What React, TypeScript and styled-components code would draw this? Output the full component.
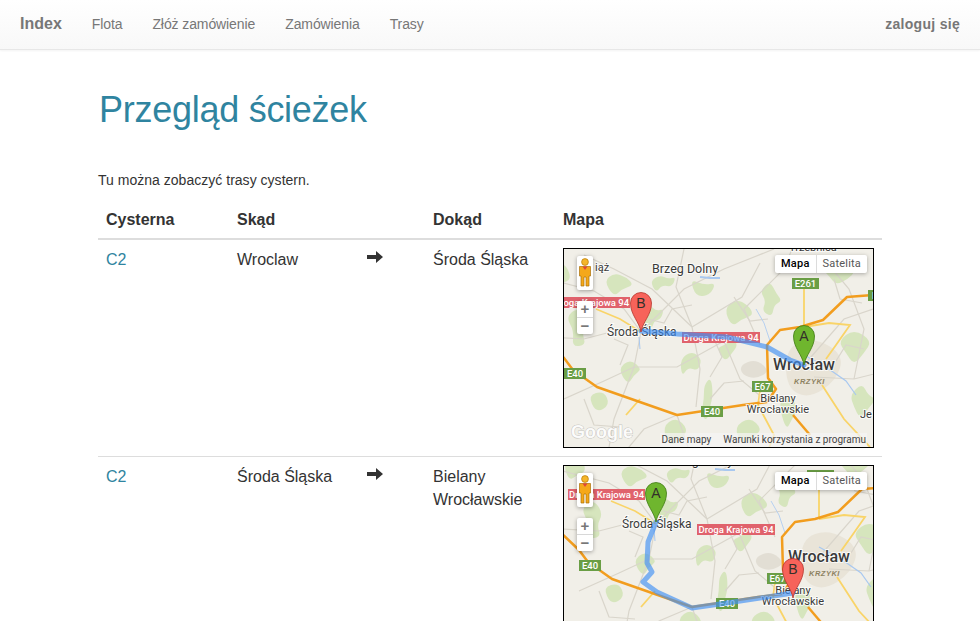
import styled, { createGlobalStyle } from "styled-components";

const GlobalStyle = createGlobalStyle`
  html, body {
    margin: 0;
    padding: 0;
    background: #fff;
  }
  body {
    font-family: "Liberation Sans", Arial, sans-serif;
    font-size: 14px;
    line-height: 1.42857;
    color: #333;
  }
`;

const Navbar = styled.nav`
  display: flex;
  align-items: center;
  justify-content: space-between;
  height: 49px;
  padding: 0 20px;
  background: linear-gradient(to bottom, #ffffff 0%, #f8f8f8 100%);
  border-bottom: 1px solid #e7e7e7;
  box-shadow: 0 1px 2px rgba(0, 0, 0, 0.05);
`;

const NavLeft = styled.div`
  display: flex;
  align-items: center;
`;

const Brand = styled.a`
  font-size: 16px;
  font-weight: bold;
  color: #777;
  margin-right: 30px;
`;

const NavLink = styled.a`
  color: #777;
  margin-right: 30px;
  letter-spacing: -0.1px;
`;

const LoginLink = styled.a`
  color: #777;
  font-weight: bold;
  letter-spacing: 0.3px;
`;

const Page = styled.main`
  padding: 0 98px;
`;

const Title = styled.h1`
  margin: 40px 0 41px 1px;
  font-size: 36px;
  font-weight: 500;
  line-height: 40px;
  letter-spacing: -0.27px;
  color: #2f84a0;
`;

const Intro = styled.p`
  margin: 0 0 8px;
  letter-spacing: 0.02px;
`;

const Table = styled.table`
  width: 100%;
  table-layout: fixed;
  border-collapse: collapse;
  font-size: 16px;
`;

const Th = styled.th<{ $width: number }>`
  box-sizing: border-box;
  width: ${(p) => p.$width}px;
  padding: 10px 8px 6px;
  text-align: left;
  font-weight: bold;
  border-bottom: 2px solid #ddd;
`;

const Td = styled.td`
  padding: 8px;
  vertical-align: top;
  border-top: 1px solid #ddd;
  tr:first-child > & {
    border-top: 0;
  }
`;

const CellText = styled.span`
  display: block;
  margin-top: 1px;
`;

const CellLink = styled.a`
  color: #2f84a0;
`;

const ArrowIcon = styled.svg`
  display: block;
  margin-top: 3px;
`;

const MapFrame = styled.div`
  position: relative;
  width: 309px;
  height: 198px;
  border: 1px solid #000;
  overflow: hidden;
  background: #f1efe8;
  font-family: Roboto, "Liberation Sans", sans-serif;
`;

const MapCanvas = styled.svg`
  display: block;
`;

const Place = styled.text<{ $size?: number; $bold?: boolean }>`
  font-family: Roboto, "Liberation Sans", sans-serif;
  font-size: ${(p) => p.$size ?? 11.5}px;
  font-weight: ${(p) => (p.$bold ? 500 : 400)};
  fill: #3a3a3a;
  stroke: rgba(255, 255, 255, 0.75);
  stroke-width: 2px;
  paint-order: stroke;
`;

const District = styled.text`
  font-family: "Liberation Sans", sans-serif;
  font-size: 7.5px;
  font-weight: bold;
  font-style: italic;
  letter-spacing: 0.5px;
  fill: #8d8262;
`;

const SignText = styled.text`
  font-family: Roboto, "Liberation Sans", sans-serif;
  font-size: 9.5px;
  font-weight: 500;
  fill: #fff;
`;

const PinLetter = styled.text`
  font-family: "Liberation Sans", sans-serif;
  font-size: 14px;
  fill: #33302a;
`;

const GoogleMark = styled.text`
  font-family: "Liberation Sans", sans-serif;
  font-size: 18px;
  font-weight: bold;
  fill: rgba(255, 255, 255, 0.9);
  stroke: rgba(130, 130, 130, 0.4);
  stroke-width: 1px;
  paint-order: stroke;
`;

const PegmanBox = styled.div`
  position: absolute;
  left: 13px;
  top: 7px;
  width: 16px;
  height: 34px;
  background: #fff;
  border-radius: 2px;
  box-shadow: 0 1px 4px rgba(0, 0, 0, 0.35);
`;

const ZoomBox = styled.div`
  position: absolute;
  left: 13px;
  top: 52px;
  width: 16px;
  height: 33px;
  display: flex;
  flex-direction: column;
  background: #fff;
  border-radius: 2px;
  box-shadow: 0 1px 4px rgba(0, 0, 0, 0.35);
`;

const ZoomButton = styled.div`
  flex: 1;
  display: flex;
  align-items: center;
  justify-content: center;
  font-family: "Liberation Sans", sans-serif;
  font-size: 15px;
  font-weight: bold;
  line-height: 1;
  color: #777;
  & + & {
    border-top: 1px solid #d8d8d8;
  }
`;

const TypeBar = styled.div`
  position: absolute;
  right: 6px;
  top: 6px;
  display: flex;
  height: 18px;
  background: #fff;
  border-radius: 2px;
  box-shadow: 0 1px 4px rgba(0, 0, 0, 0.3);
`;

const TypeButton = styled.div<{ $active?: boolean }>`
  display: flex;
  align-items: center;
  padding: 0 6px;
  font-size: 11px;
  letter-spacing: 0.2px;
  font-weight: ${(p) => (p.$active ? 500 : 400)};
  color: ${(p) => (p.$active ? "#000" : "#565656")};
  & + & {
    border-left: 1px solid #dcdcdc;
  }
`;

const Attribution = styled.div`
  position: absolute;
  right: 6px;
  bottom: 0;
  display: flex;
  gap: 12px;
  padding: 0 1px;
  font-size: 10px;
  line-height: 14px;
  color: #444;
  background: rgba(245, 245, 245, 0.7);
`;

type Point = [number, number];

const line = (pts: Point[]) => pts.map((p) => p.join(",")).join(" ");

// rounded outline through the midpoints, so the woods don't look like polygons
const blob = (pts: Point[]) => {
  const mid = (a: Point, b: Point) => `${(a[0] + b[0]) / 2} ${(a[1] + b[1]) / 2}`;
  const n = pts.length;
  let d = `M${mid(pts[n - 1], pts[0])}`;
  pts.forEach((p, i) => {
    d += ` Q${p[0]} ${p[1]} ${mid(p, pts[(i + 1) % n])}`;
  });
  return d + "Z";
};

const greenAreas: Point[][] = [
  [[78, 64], [86, 56], [92, 62], [100, 60], [97, 70], [90, 72], [88, 80], [80, 76]],
  [[154, 98], [162, 96], [168, 88], [174, 96], [168, 104], [162, 112], [156, 106]],
  [[140, 136], [147, 128], [149, 146], [146, 158], [143, 172], [137, 166], [140, 150]],
  [[86, 32], [96, 26], [104, 30], [112, 28], [108, 38], [98, 36], [92, 44]],
  [[196, 42], [206, 32], [212, 44], [218, 52], [210, 56], [208, 68], [198, 62], [202, 52]],
  [[286, 146], [298, 134], [304, 146], [312, 150], [304, 160], [296, 170], [290, 158]],
  [[40, 32], [50, 24], [62, 28], [70, 36], [58, 40], [50, 48]],
  [[160, 60], [172, 50], [184, 56], [190, 66], [178, 70], [168, 78]],
  [[2, 68], [14, 58], [24, 72], [18, 84], [22, 96], [8, 98], [10, 82]],
  [[116, 110], [128, 102], [138, 110], [134, 122], [124, 118], [118, 128]],
  [[54, 120], [66, 110], [78, 120], [70, 126], [64, 136]],
  [[258, 20], [272, 12], [292, 22], [284, 30], [272, 36], [266, 28]],
  [[274, 92], [290, 80], [308, 92], [300, 104], [290, 116], [282, 104]],
  [[-16, 22], [0, 12], [8, 30], [-2, 34], [-10, 40]],
  [[170, 178], [186, 168], [198, 180], [190, 188], [178, 196]],
  [[98, 178], [112, 168], [124, 180], [118, 190], [106, 198]],
  [[214, 152], [226, 144], [234, 160], [228, 170], [222, 182]],
  [[126, 30], [140, 36], [152, 34], [146, 46], [132, 48]],
  [[24, 146], [40, 142], [46, 156], [32, 164]],
];

const minorRoads: Point[][] = [
  [[-16, 30], [30, 42], [60, 60], [77, 83], [70, 118], [50, 170], [44, 204]],
  [[77, 83], [120, 40], [160, 20], [210, 0]],
  [[120, 0], [112, 38], [128, 78], [136, 120], [132, 158]],
  [[128, 78], [178, 48], [196, 14]],
  [[160, 92], [176, 130], [200, 150]],
  [[20, 6], [50, 20], [88, 40], [128, 78]],
  [[0, 150], [40, 132], [70, 118], [113, 118], [160, 92]],
  [[240, 116], [280, 70], [309, 60], [330, 50]],
  [[250, 128], [290, 130], [330, 120]],
  [[60, 204], [80, 180], [113, 166]],
  [[196, 96], [180, 60], [220, 20], [228, 0]],
  [[113, 166], [126, 204]],
  [[260, 10], [285, 40], [300, 80], [290, 130]],
  [[-16, 88], [20, 90], [43, 84]],
  [[84, 70], [100, 74], [108, 60], [128, 56]],
  [[150, 90], [158, 108], [146, 128]],
  [[56, 116], [64, 96], [50, 90]],
  [[170, 48], [186, 72], [204, 70]],
  [[270, 30], [276, 50], [298, 54]],
  [[300, 100], [282, 96], [272, 112]],
  [[146, 150], [160, 134], [180, 132]],
  [[20, 150], [30, 176], [56, 178]],
];

const RoadSign = ({ x, y, w, color, text }: { x: number; y: number; w: number; color: string; text: string }) => (
  <g>
    <rect x={x} y={y} width={w} height={11} fill={color} />
    <SignText x={x + w / 2} y={y + 9} textAnchor="middle">
      {text}
    </SignText>
  </g>
);

const WorldMap = ({ dx, dy, route }: { dx: number; dy: number; route: Point[] }) => (
  <g transform={`translate(${dx} ${dy})`}>
    {greenAreas.map((a, i) => (
      <path key={i} d={blob(a)} fill="#d6e5bd" />
    ))}
    <path d={blob([[176, 116], [192, 110], [206, 122], [192, 130], [178, 126]])} fill="#e2ded4" />
    <path d={blob([[222, 98], [250, 88], [280, 106], [272, 132], [244, 150], [222, 138]])} fill="#e9e4d8" />
    {minorRoads.map((r, i) => (
      <polyline key={i} points={line(r)} fill="none" stroke="#d9d5cb" strokeWidth="1.2" />
    ))}
    <polyline points="136,28 146,29 156,29" fill="none" stroke="#a8c8f0" strokeWidth="2" />
    <polyline points="192,60 200,74 206,92" fill="none" stroke="#b6d0f0" strokeWidth="1" />
    <polyline points="240,106 262,118 282,132 292,146" fill="none" stroke="#a8c8f0" strokeWidth="1.2" />
    <polyline points="75,88 76,100" fill="none" stroke="#a8c8f0" strokeWidth="1" />
    <polyline points="240,36 240,78" fill="none" stroke="#f9d468" strokeWidth="1.8" />
    <polyline points="240,78 265,74 286,76 272,96 262,110" fill="none" stroke="#f9d468" strokeWidth="1.8" />
    <polyline points="258,136 280,170 306,198" fill="none" stroke="#f9d468" strokeWidth="1.8" />
    <polyline points="196,142 194,156 210,186 203,204" fill="none" stroke="#f9d468" strokeWidth="1.8" />
    <polyline points="32,60 56,70 77,83" fill="none" stroke="#f9d468" strokeWidth="1.5" />
    <polyline points="62,166 76,150" fill="none" stroke="#f9d468" strokeWidth="1.8" />
    <polyline
      points="-20,90 0,109 9,121 33,138 113,166 179,156 203,153 212,140 204,129 203,96 216,81 236,78 259,71 283,48 309,46 330,44"
      fill="none"
      stroke="#f29d1e"
      strokeWidth="2.5"
      strokeLinejoin="round"
    />
    <polyline points="229,166 246,186" fill="none" stroke="#f29d1e" strokeWidth="2.5" />
    <Place x="88" y="24" $size={12.5}>Brzeg Dolny</Place>
    <Place x="31" y="22" $size={11}>iąż</Place>
    <Place x="225" y="2" $size={11}>Trzebnica</Place>
    <Place x="43" y="87" $size={12}>Środa Śląska</Place>
    <Place x="209" y="121" $size={16} $bold>Wrocław</Place>
    <Place x="214" y="153" $size={11} textAnchor="middle">Bielany</Place>
    <Place x="214" y="164" $size={11} textAnchor="middle">Wrocławskie</Place>
    <Place x="296" y="169" $size={11}>Je</Place>
    <District x="230" y="135">KRZYKI</District>
    <RoadSign x={118} y={83} w={78} color="#e0626c" text="Droga Krajowa 94" />
    <RoadSign x={-11} y={48} w={77} color="#e0626c" text="Droga Krajowa 94" />
    <RoadSign x={228} y={29} w={27} color="#6a9e45" text="E261" />
    <RoadSign x={188} y={132} w={21} color="#6a9e45" text="E67" />
    <RoadSign x={0} y={119} w={22} color="#6a9e45" text="E40" />
    <RoadSign x={137} y={157} w={22} color="#6a9e45" text="E40" />
    <RoadSign x={304} y={41} w={24} color="#6a9e45" text="E40" />
    <polyline
      points={line(route)}
      fill="none"
      stroke="#3f8ff5"
      strokeOpacity="0.65"
      strokeWidth="5"
      strokeLinejoin="round"
      strokeLinecap="round"
    />
  </g>
);

const Pin = ({ x, y, label, fill, edge }: { x: number; y: number; label: string; fill: string; edge: string }) => (
  <g transform={`translate(${x} ${y})`}>
    <path
      d="M0 0 C-1.5 -10 -10.5 -17 -10.5 -29 A10.5 10.5 0 1 1 10.5 -29 C10.5 -17 1.5 -10 0 0 Z"
      fill={fill}
      stroke={edge}
      strokeWidth="0.8"
    />
    <PinLetter x="0" y="-24" textAnchor="middle">
      {label}
    </PinLetter>
  </g>
);

const Pegman = () => (
  <svg width="16" height="34" viewBox="0 0 16 34">
    <circle cx="8" cy="6" r="3.4" fill="#f5b62a" stroke="#b67a08" strokeWidth="0.7" />
    <path
      d="M2.5 10.5H13.5V20H12V30H9V21H7V30H4V20H2.5Z"
      fill="#f5a81a"
      stroke="#a9700a"
      strokeWidth="0.7"
    />
    <path d="M5.5 10.5H10.5L8 14Z" fill="#e0453a" />
  </svg>
);

type RouteMapProps = {
  dx: number;
  dy: number;
  route: Point[];
  pinA: Point;
  pinB: Point;
};

const RouteMap = ({ dx, dy, route, pinA, pinB }: RouteMapProps) => (
  <MapFrame>
    <MapCanvas width="309" height="198" viewBox="0 0 309 198">
      <WorldMap dx={dx} dy={dy} route={route} />
      <Pin x={pinB[0]} y={pinB[1]} label="B" fill="#f7635a" edge="#b5352c" />
      <Pin x={pinA[0]} y={pinA[1]} label="A" fill="#6fb62e" edge="#3f7a12" />
      <GoogleMark x="7" y="189">Google</GoogleMark>
    </MapCanvas>
    <PegmanBox>
      <Pegman />
    </PegmanBox>
    <ZoomBox>
      <ZoomButton>+</ZoomButton>
      <ZoomButton>−</ZoomButton>
    </ZoomBox>
    <TypeBar>
      <TypeButton $active>Mapa</TypeButton>
      <TypeButton>Satelita</TypeButton>
    </TypeBar>
    <Attribution>
      <span>Dane mapy</span>
      <span>Warunki korzystania z programu</span>
    </Attribution>
  </MapFrame>
);

const Arrow = () => (
  <ArrowIcon width="16" height="12" viewBox="0 0 16 12">
    <path d="M0 4H9V0L16 6L9 12V8H0Z" fill="#333" />
  </ArrowIcon>
);

const rows = [
  {
    id: "C2",
    from: "Wroclaw",
    to: "Środa Śląska",
    map: {
      dx: 0,
      dy: 0,
      pinA: [240, 116] as Point,
      pinB: [77, 83] as Point,
      route: [[240, 116], [226, 111], [203, 98], [163, 88], [113, 85], [77, 82]] as Point[],
    },
  },
  {
    id: "C2",
    from: "Środa Śląska",
    to: "Bielany Wrocławskie",
    map: {
      dx: 15,
      dy: -25,
      pinA: [92, 56] as Point,
      pinB: [229, 132] as Point,
      route: [[77, 81], [69, 101], [68, 122], [73, 131], [64, 141], [78, 151], [113, 167], [148, 162], [181, 157], [214, 152]] as Point[],
    },
  },
];

const App = () => (
  <>
    <GlobalStyle />
    <Navbar>
      <NavLeft>
        <Brand>Index</Brand>
        <NavLink>Flota</NavLink>
        <NavLink>Złóż zamówienie</NavLink>
        <NavLink>Zamówienia</NavLink>
        <NavLink>Trasy</NavLink>
      </NavLeft>
      <LoginLink>zaloguj się</LoginLink>
    </Navbar>
    <Page>
      <Title>Przegląd ścieżek</Title>
      <Intro>Tu można zobaczyć trasy cystern.</Intro>
      <Table>
        <thead>
          <tr>
            <Th $width={131}>Cysterna</Th>
            <Th $width={130}>Skąd</Th>
            <Th $width={66} />
            <Th $width={130}>Dokąd</Th>
            <Th $width={327}>Mapa</Th>
          </tr>
        </thead>
        <tbody>
          {rows.map((row, idx) => (
            <tr key={idx}>
              <Td>
                <CellText>
                  <CellLink>{row.id}</CellLink>
                </CellText>
              </Td>
              <Td>
                <CellText>{row.from}</CellText>
              </Td>
              <Td>
                <Arrow />
              </Td>
              <Td>
                <CellText>{row.to}</CellText>
              </Td>
              <Td>
                <RouteMap {...row.map} />
              </Td>
            </tr>
          ))}
        </tbody>
      </Table>
    </Page>
  </>
);

export default App;
